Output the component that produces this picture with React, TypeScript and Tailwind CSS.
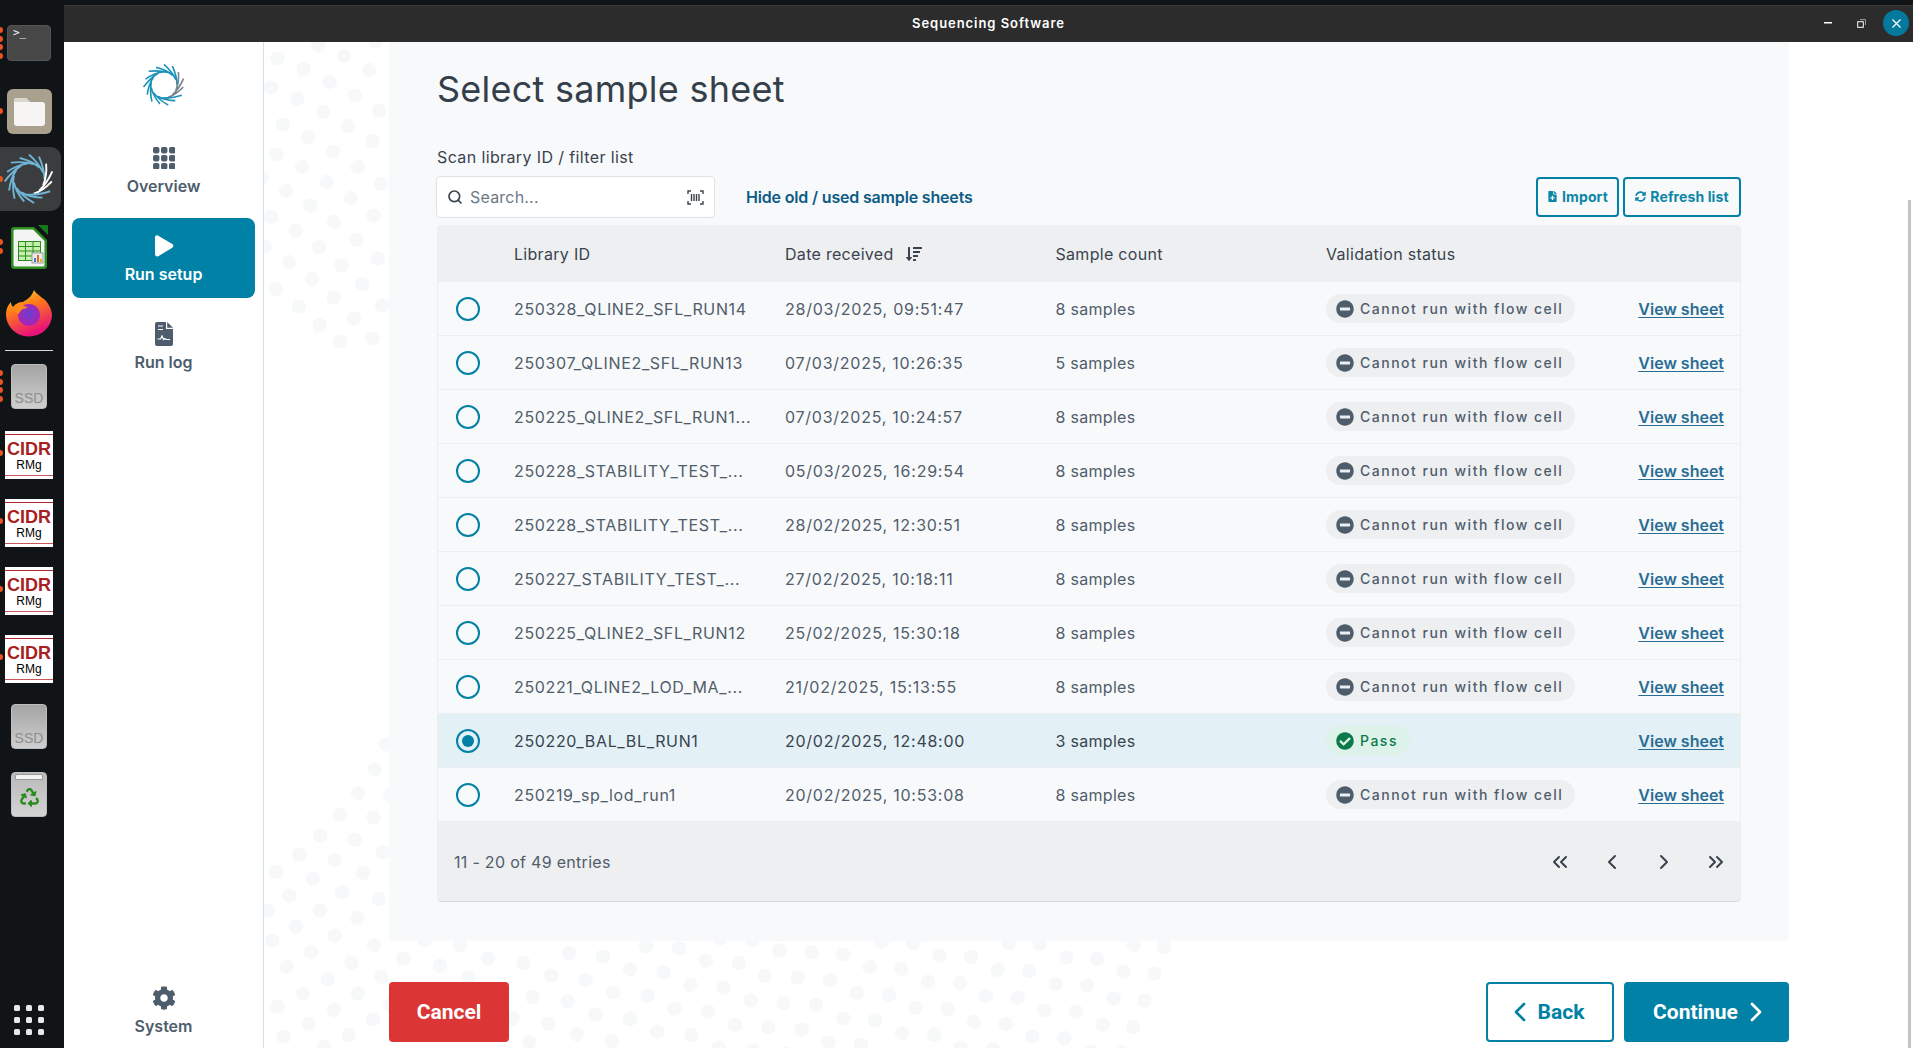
import React from "react";
import { ChevronLeft, ChevronRight, ChevronsLeft, ChevronsRight, Search } from "lucide-react";
import { FaCheckCircle, FaCog, FaFileMedical, FaMinusCircle, FaRecycle, FaSortAmountDown, FaSyncAlt } from "react-icons/fa";

const z9 = [[52,55],[131,88],[209,126],[252,48],[328,90],[175,15],[347,5],[33,143],[112,177],[189,215],[284,166],[357,212],[68,254],[145,291],[264,258],[337,304],[50,343],[126,381],[220,334],[293,381],[200,426],[362,432],[5,415],[78,453],[151,497],[272,474],[33,530],[107,573],[222,546],[341,527],[14,620],[177,622],[290,599],[87,666],[244,676],[354,656],[156,717],[47,747],[307,733],[116,800],[221,773],[366,796],[179,856],[282,835],[338,895],[240,905]];
const z7 = [[330,133],[299,209],[256,279],[340,285],[209,345],[296,353],[157,407],[247,419],[102,464],[195,480],[320,458],[42,515],[138,536],[269,519],[77,587],[214,577],[310,597],[20,632],[156,631],[254,654],[94,680],[195,707],[32,722],[133,756],[298,735],[69,800],[239,788],[374,776],[470,797],[596,775],[689,789],[430,720],[523,737],[177,837],[317,831],[112,881],[256,881],[545,833],[761,827],[851,839],[967,807],[1054,817],[1009,739],[1095,745],[808,760],[896,770],[45,920],[193,930],[340,915],[128,970],[295,958],[62,1010],[232,1005],[712,891],[804,905],[923,878],[1012,887],[1125,855],[660,955],[754,970],[876,943],[967,957],[1083,926],[828,1003],[1038,995],[1127,1005],[703,1027],[919,1023],[168,1040]];
const z10 = [[18,92],[116,99],[237,62],[334,68],[429,73],[509,111],[604,117],[719,77],[813,81],[893,120],[988,123],[1099,82],[1192,86],[1271,125],[1363,130],[71,173],[195,137],[293,143],[390,151],[470,188],[567,195],[684,155],[780,159],[858,198],[954,203],[1067,162],[1161,167],[1241,205],[1333,212],[24,245],[152,211],[250,219],[348,226],[429,265],[525,271],[646,233],[742,237],[822,276],[917,282],[1033,241],[1128,245],[1207,284],[1300,291],[105,284],[205,291],[305,299],[385,337],[483,345],[606,309],[703,315],[782,353],[879,358],[997,320],[1093,324],[1172,364],[1267,368],[56,353],[158,362],[258,370],[61,25],[157,30],[546,35],[640,40],[926,40],[1019,42],[1301,45],[1392,50]];
const dots = [
  ...z9.map(([x, y]) => [260 + x / 3, 40 + y / 3]),
  ...z7.map(([x, y]) => [260 + x / 2.613, 700 + y / 3]),
  ...z10.map(([x, y]) => [700 + x / 3, 930 + y / 3]),
];

const rows = [
  ["250328_QLINE2_SFL_RUN14", "28/03/2025, 09:51:47", "8 samples"],
  ["250307_QLINE2_SFL_RUN13", "07/03/2025, 10:26:35", "5 samples"],
  ["250225_QLINE2_SFL_RUN1...", "07/03/2025, 10:24:57", "8 samples"],
  ["250228_STABILITY_TEST_...", "05/03/2025, 16:29:54", "8 samples"],
  ["250228_STABILITY_TEST_...", "28/02/2025, 12:30:51", "8 samples"],
  ["250227_STABILITY_TEST_...", "27/02/2025, 10:18:11", "8 samples"],
  ["250225_QLINE2_SFL_RUN12", "25/02/2025, 15:30:18", "8 samples"],
  ["250221_QLINE2_LOD_MA_...", "21/02/2025, 15:13:55", "8 samples"],
  ["250220_BAL_BL_RUN1", "20/02/2025, 12:48:00", "3 samples"],
  ["250219_sp_lod_run1", "20/02/2025, 10:53:08", "8 samples"],
];

function Swirl({ size, color, accent }: { size: number; color: string; accent: string }) {
  const n = 15;
  const items = Array.from({ length: n }, (_, k) => {
    const t = (k * 360) / n;
    const a = (t * Math.PI) / 180;
    const p = (r: number, d: number) => {
      const ang = a + (d * Math.PI) / 180;
      return `${(50 + r * Math.cos(ang)).toFixed(1)} ${(50 + r * Math.sin(ang)).toFixed(1)}`;
    };
    const len = k % 2 === 0 ? 49 : 46;
    const d = `M${p(31, 0)} Q${p(37, -34)} ${p(len, -66)}`;
    const isAccent = k >= 1 && k <= 3;
    return <path key={k} d={d} fill="none" stroke={isAccent ? accent : color} strokeWidth={3.8} strokeLinecap="butt" />;
  });
  return (
    <svg width={size} height={size} viewBox="0 0 100 100">
      <circle cx="50" cy="50" r="32" fill="none" stroke={color} strokeWidth="3" />
      {items}
    </svg>
  );
}

function Dot({ y }: { y: number }) {
  return <span className="absolute left-[-3px] w-[6px] h-[6px] rounded-full bg-[#e95420]" style={{ top: y }} />;
}

function Cidr() {
  return (
    <div className="relative w-[48px] h-[48px] mb-[20px] bg-white flex flex-col items-center font-['Liberation_Sans',sans-serif] shrink-0">
      <span className="w-full h-[1.500px] mt-[2.500px] bg-[#b3282d]" />
      <span className="text-[18px] leading-[18px] font-bold text-[#a8201f] mt-[5px]">CIDR</span>
      <span className="text-[12px] leading-[12px] text-black mt-[1px]">RMg</span>
      <span className="absolute left-0 right-0 bottom-[3px] h-px bg-[#c9565a]" />
    </div>
  );
}

function Ssd({ cls }: { cls: string }) {
  return (
    <div className={`w-[36px] h-[45px] rounded-[4px] bg-gradient-to-b from-[#a4a4a4] to-[#cfcfcf] border border-[#bdbdbd] flex items-end justify-center shrink-0 ${cls}`}>
      <span className="text-[14px] leading-[19px] text-[#8e8e8e] font-['Liberation_Sans',sans-serif]">SSD</span>
    </div>
  );
}

function Dock() {
  return (
    <aside className="relative w-16 h-screen shrink-0 bg-[#111416] flex flex-col items-center pr-[6px] overflow-hidden">
      <div className="w-[44px] h-[36px] mt-[25px] rounded-[4px] bg-[#474747] border border-[#555] pl-[5px] font-['DejaVu_Sans_Mono',monospace] text-[11px] leading-[14px] text-white shrink-0">
        &gt;_
      </div>
      <div className="w-[45px] h-[45px] mt-[28px] rounded-[6px] bg-[#a9a18e] flex items-center justify-center shrink-0">
        <svg width="33" height="29" viewBox="0 0 33 29"><path d="M1 4a3 3 0 0 1 3-3h9l4 4h12a3 3 0 0 1 3 3v18a3 3 0 0 1-3 3H4a3 3 0 0 1-3-3z" fill="#f6f5f3" /><path d="M1 4a3 3 0 0 1 3-3h9l4 4H1z" fill="#dbd7cd" /></svg>
      </div>
      <div className="w-[61px] h-[64px] mt-[13px] self-start rounded-r-[10px] bg-[#3a3c3e] flex items-center justify-center pr-[3px] shrink-0">
        <Swirl size={50} color="#6fb4d4" accent="#ffffff" />
      </div>
      <div className="mt-[14px] h-[45px] shrink-0">
        <svg width="37" height="45" viewBox="0 0 37 45">
          <path d="M3 2h20l13 13v26a3 3 0 0 1-3 3H3a3 3 0 0 1-3-3V5a3 3 0 0 1 3-3z" fill="#2c8c1e" />
          <path d="M4 4.500h18L33.500 16v24a1.500 1.500 0 0 1-1.500 1.500H4A1.500 1.500 0 0 1 2.500 40V6A1.500 1.500 0 0 1 4 4.500z" fill="#f4f4f4" />
          <path d="M27 0h9a1 1 0 0 1 1 1v9z" fill="#17781c" />
          <rect x="7.500" y="16.500" width="22" height="19" fill="#c6efb0" stroke="#2c8c1e" />
          <path d="M7 21.500h22M7 26h22M7 31h22M14.500 16v20M22 16v20" stroke="#2c8c1e" />
          <rect x="21" y="28" width="11" height="10" fill="#ececec" stroke="#999" />
          <rect x="23" y="33" width="2" height="4" fill="#3a7ec2" />
          <rect x="26" y="30" width="2" height="7" fill="#e0662b" />
          <rect x="29" y="34" width="2" height="3" fill="#e8b82b" />
        </svg>
      </div>
      <div className="mt-[20px] shrink-0 h-[47px]">
        <svg width="46" height="47" viewBox="0 0 46 47">
          <defs>
            <linearGradient id="ffa" x1="0" y1="0" x2="0.4" y2="1"><stop offset="0" stopColor="#ffde2e" /><stop offset="0.45" stopColor="#ff7a18" /><stop offset="1" stopColor="#e8127b" /></linearGradient>
            <radialGradient id="ffb" cx="0.5" cy="0.45" r="0.6"><stop offset="0" stopColor="#6a3fd0" /><stop offset="1" stopColor="#b51fae" /></radialGradient>
          </defs>
          <path d="M28 0c3 5 7 6 12 11 5 6 6 12 6 14a23 22 0 1 1-46-1c0-5 2-9 5-12 0 2 1 4 2 5 3-4 7-5 10-5 5-3 9-6 11-12z" fill="url(#ffa)" />
          <circle cx="23" cy="25" r="11" fill="url(#ffb)" />
          <path d="M7 18c4-4 11-3 15 0-4 0-8 2-9 6-3-1-5-3-6-6z" fill="#ff8a1c" />
        </svg>
      </div>
      <div className="w-[48px] h-px bg-[#d8d8d8] mt-[13px] shrink-0" />
      <Ssd cls="mt-[13px] mb-[22px]" />
      <Cidr />
      <Cidr />
      <Cidr />
      <Cidr />
      <Ssd cls="mt-px" />
      <div className="w-[36px] h-[45px] mt-[23px] rounded-[4px] bg-gradient-to-b from-[#b9b9b9] to-[#d4d4d4] border border-[#bdbdbd] flex flex-col items-center shrink-0">
        <div className="w-[28px] h-[6px] mt-px bg-[#f4f4f4] rounded-t-[2px] border border-[#999]" />
        <FaRecycle className="mt-[8px] text-[#2b8a1f]" size={19} />
      </div>
      <div className="absolute left-[14px] top-[1005px] grid grid-cols-3 gap-x-[6px] gap-y-[6px]">
        {Array.from({ length: 9 }, (_, i) => (
          <span key={i} className="w-[6px] h-[6px] rounded-[1.500px] bg-[#e8e8e8]" />
        ))}
      </div>
      {[30, 39, 47, 56, 111, 179, 242, 251, 373, 382, 390, 399, 453, 521, 589, 657].map((y) => (
        <Dot key={y} y={y - 3} />
      ))}
    </aside>
  );
}

function NavItem({ label, icon, active, cls }: { label: string; icon: React.ReactNode; active?: boolean; cls?: string }) {
  return (
    <div className={`flex flex-col items-center rounded-[8px] w-[183px] ${active ? "bg-[#0081a5] text-white" : "text-[#4e5d6c]"} ${cls || ""}`}>
      {icon}
      <span className="text-[16px] leading-[20px] font-semibold">{label}</span>
    </div>
  );
}

function Sidebar() {
  return (
    <nav className="w-[200px] shrink-0 bg-white border-r border-[#cfe3ea] flex flex-col items-center">
      <div className="mt-[22px]">
        <Swirl size={42} color="#1a92b8" accent="#76828c" />
      </div>
      <NavItem
        cls="mt-[41px] h-[60px]"
        label="Overview"
        icon={
          <svg width="22" height="22" viewBox="0 0 22 22" className="mb-[7px]" fill="#4e5d6c">
            {[0, 8, 16].flatMap((y) => [0, 8, 16].map((x) => <rect key={`${x}-${y}`} x={x} y={y} width="6.400" height="6.400" rx="1.800" />))}
          </svg>
        }
      />
      <NavItem
        active
        cls="mt-[11px] h-[80px] pt-[17px]"
        label="Run setup"
        icon={
          <svg width="20" height="22" viewBox="0 0 20 22" className="mb-[7px]" fill="#fff">
            <path d="M1 2.500C1 .8 2.800-.2 4.300.7l14 8.300c1.400.8 1.400 2.900 0 3.700l-14 8.500C2.800 22 1 21 1 19.300z" />
          </svg>
        }
      />
      <NavItem
        cls="mt-[24px] h-[60px]"
        label="Run log"
        icon={
          <svg width="18" height="24" viewBox="0 0 18 24" className="mb-[6px]">
            <path d="M2 0h9v7h7v15a2 2 0 0 1-2 2H2a2 2 0 0 1-2-2V2a2 2 0 0 1 2-2z" fill="#4e5d6c" />
            <path d="M12.200 0 18 5.800h-5.800z" fill="#4e5d6c" />
            <path d="M3 4h5M3 7.500h5" stroke="#fff" strokeWidth="1.200" />
            <path d="M2.500 17h3l1.500-3 1.500 3.500 1.500-1 1 1h4" stroke="#fff" strokeWidth="1.200" fill="none" />
          </svg>
        }
      />
      <div className="flex-1" />
      <NavItem
        cls="mb-[12px]"
        label="System"
        icon={<FaCog size={24} className="mb-[6px]" />}
      />
    </nav>
  );
}

function Badge({ pass }: { pass: boolean }) {
  if (pass) {
    return (
      <span className="inline-flex items-center h-[29px] w-[84px] rounded-full bg-[#ddf3ea] pl-[10px] text-[#0b7a4b] text-[14px] font-medium tracking-[1.500px]">
        <FaCheckCircle size={18} className="mr-[6px] text-[#0b7a4b]" />
        Pass
      </span>
    );
  }
  return (
    <span className="inline-flex items-center h-[29px] w-[249px] rounded-full bg-[#eeeff1] pl-[10px] text-[#4e5d6c] text-[14px] font-medium tracking-[1.500px] whitespace-nowrap">
      <FaMinusCircle size={18} className="mr-[6px] text-[#4e5d6c]" />
      Cannot run with flow cell
    </span>
  );
}

function Row({ r }: { r: string[] }) {
  const selected = r[0] === "250220_BAL_BL_RUN1";
  return (
    <div className={`grid grid-cols-[76px_271px_270.500px_270.500px_1fr] items-center h-[54px] border-b border-[#eceef0] text-[16px] ${selected ? "bg-[#e3f1f6] text-[#39434e]" : "text-[#505d6b]"}`}>
      <span className="justify-self-start ml-[18px] w-[24px] h-[24px] rounded-full border-[2.500px] border-[#0081a5] flex items-center justify-center">
        {selected && <span className="w-[12px] h-[12px] rounded-full bg-[#0081a5]" />}
      </span>
      <span className="whitespace-nowrap tracking-[0.650px]">{r[0]}</span>
      <span className="whitespace-nowrap tracking-[0.750px]">{r[1]}</span>
      <span className="whitespace-nowrap tracking-[0.300px]">{r[2]}</span>
      <div className="flex items-center justify-between pr-[16px]">
        <Badge pass={selected} />
        <a className="text-[16px] font-semibold text-[#2a6d94] underline underline-offset-2">View sheet</a>
      </div>
    </div>
  );
}

function Panel() {
  return (
    <section className="h-[899px] bg-[#f8f9fb] rounded-b-[4px] px-[48px] pt-[27px]">
      <h1 className="text-[36px] leading-[40px] text-[#353f49] tracking-[0.250px]">Select sample sheet</h1>
      <div className="mt-[36px] text-[16px] leading-[24px] text-[#39434e] tracking-[0.380px]">Scan library ID / filter list</div>
      <div className="mt-[7px] flex items-center h-[42px]">
        <div className="w-[279px] h-[42px] -ml-px bg-white border border-[#dfe1e5] rounded-[4px] flex items-center pl-[10px] pr-[10px]">
          <Search size={16} strokeWidth={2.500} className="text-[#39434e]" />
          <span className="ml-[7px] text-[16px] text-[#6d7985] tracking-[0.200px]">Search...</span>
          <svg width="17" height="15" viewBox="0 0 17 15" className="ml-auto" fill="none" stroke="#39434e" strokeWidth="1.400">
            <path d="M1 4V1h3M13 1h3v3M1 11v3h3M13 14h3v-3" />
            <path d="M4.500 4v7M7 4v7M9.500 4v7M12 4v7" />
          </svg>
        </div>
        <span className="ml-[31px] text-[16px] font-semibold text-[#0d5c84] tracking-[-0.170px]">Hide old / used sample sheets</span>
        <div className="ml-auto flex gap-[4px]">
          <button className="w-[83px] h-[40px] pb-px border-2 border-[#0081a5] rounded-[4px] flex items-center justify-center gap-[4px] text-[#0c86a8] text-[14px] font-bold tracking-[0.100px]">
            <FaFileMedical size={11} />
            Import
          </button>
          <button className="w-[118px] h-[40px] pb-px border-2 border-[#0081a5] rounded-[4px] flex items-center justify-center gap-[4px] text-[#0c86a8] text-[14px] font-bold tracking-[0.100px]">
            <FaSyncAlt size={11} />
            Refresh list
          </button>
        </div>
      </div>
      <div className="mt-[7px] border-x border-[#eceef0] rounded-[4px]">
        <div className="grid grid-cols-[76px_271px_270.500px_270.500px_1fr] items-center h-[57px] bg-[#eeeff1] rounded-t-[4px] text-[16px] text-[#39434e] tracking-[0.300px]">
          <span />
          <span>Library ID</span>
          <span className="flex items-center gap-[12px]">
            Date received
            <FaSortAmountDown size={16} />
          </span>
          <span>Sample count</span>
          <span>Validation status</span>
        </div>
        {rows.map((r, i) => (
          <Row key={i} r={r} />
        ))}
        <div className="h-[80px] bg-[#eeeff1] border-b border-[#d5d7da] rounded-b-[4px] flex items-center pl-[16px] text-[16px] text-[#505d6b] tracking-[0.300px]">
          11 - 20 of 49 entries
          <div className="ml-auto flex items-center gap-[28px] pr-[12px] text-[#39434e]">
            <ChevronsLeft size={24} strokeWidth={2} />
            <ChevronLeft size={24} strokeWidth={2} />
            <ChevronRight size={24} strokeWidth={2} />
            <ChevronsRight size={24} strokeWidth={2} />
          </div>
        </div>
      </div>
    </section>
  );
}

export default function App() {
  return (
    <div className="flex h-screen w-full overflow-hidden bg-[#111416] font-['Inter',sans-serif]">
      <Dock />
      <div className="flex-1 flex flex-col pt-[5px] min-w-0">
        <header className="relative h-[37px] shrink-0 bg-[#2c2c2c] border-t border-[#3a3a3a] flex items-center justify-center text-white text-[13px] font-semibold tracking-[0.950px]">
          Sequencing Software
          <div className="absolute right-[4px] top-[4px] flex items-center">
            <svg width="8" height="2" className="mr-[25px]"><rect width="8" height="1.500" fill="#fff" /></svg>
            <svg width="9" height="9" viewBox="0 0 9 9" className="mr-[17px]" fill="none"><path d="M3 .5h5.500V6" stroke="#999" /><rect x="0.700" y="2.700" width="5.600" height="5.600" stroke="#fff" /></svg>
            <span className="w-[26px] h-[26px] rounded-full bg-[#05799b] flex items-center justify-center">
              <svg width="9" height="9" viewBox="0 0 9 9" stroke="#fff" strokeWidth="1.200"><path d="M.5.500l8 8M8.500.500l-8 8" /></svg>
            </span>
          </div>
        </header>
        <div className="flex-1 flex min-h-0">
          <Sidebar />
          <main className="relative flex-1 bg-white overflow-hidden pl-[125px] pr-[124px]">
            <svg className="absolute left-0 top-0 w-[1649px] h-[1006px]" viewBox="264 42 1649 1006">
              {dots.map(([x, y], i) => (
                <circle key={i} cx={x} cy={y} r="7.200" fill="#f7f8fa" />
              ))}
            </svg>
            <div className="relative">
              <Panel />
              <div className="mt-[41px] flex justify-between font-['Roboto',sans-serif] text-[21px] font-bold">
                <button className="w-[120px] h-[60px] pt-px bg-[#dc3535] rounded-[4px] text-white">Cancel</button>
                <div className="flex gap-[10px]">
                  <button className="w-[128px] h-[60px] bg-white border-2 border-[#0081a5] rounded-[4px] text-[#0081a5] flex items-center justify-center gap-[2px]">
                    <ChevronLeft size={32} strokeWidth={2} className="-ml-[12px]" />
                    <span className="pt-px">Back</span>
                  </button>
                  <button className="w-[165px] h-[60px] bg-[#0081a5] rounded-[4px] text-white flex items-center justify-center gap-[2px]">
                    <span className="pt-px">Continue</span>
                    <ChevronRight size={32} strokeWidth={2} className="-mr-[12px]" />
                  </button>
                </div>
              </div>
            </div>
            <div className="absolute right-[2px] top-[158px] bottom-0 w-[3px] bg-[#c4c4c4]" />
          </main>
        </div>
      </div>
    </div>
  );
}
